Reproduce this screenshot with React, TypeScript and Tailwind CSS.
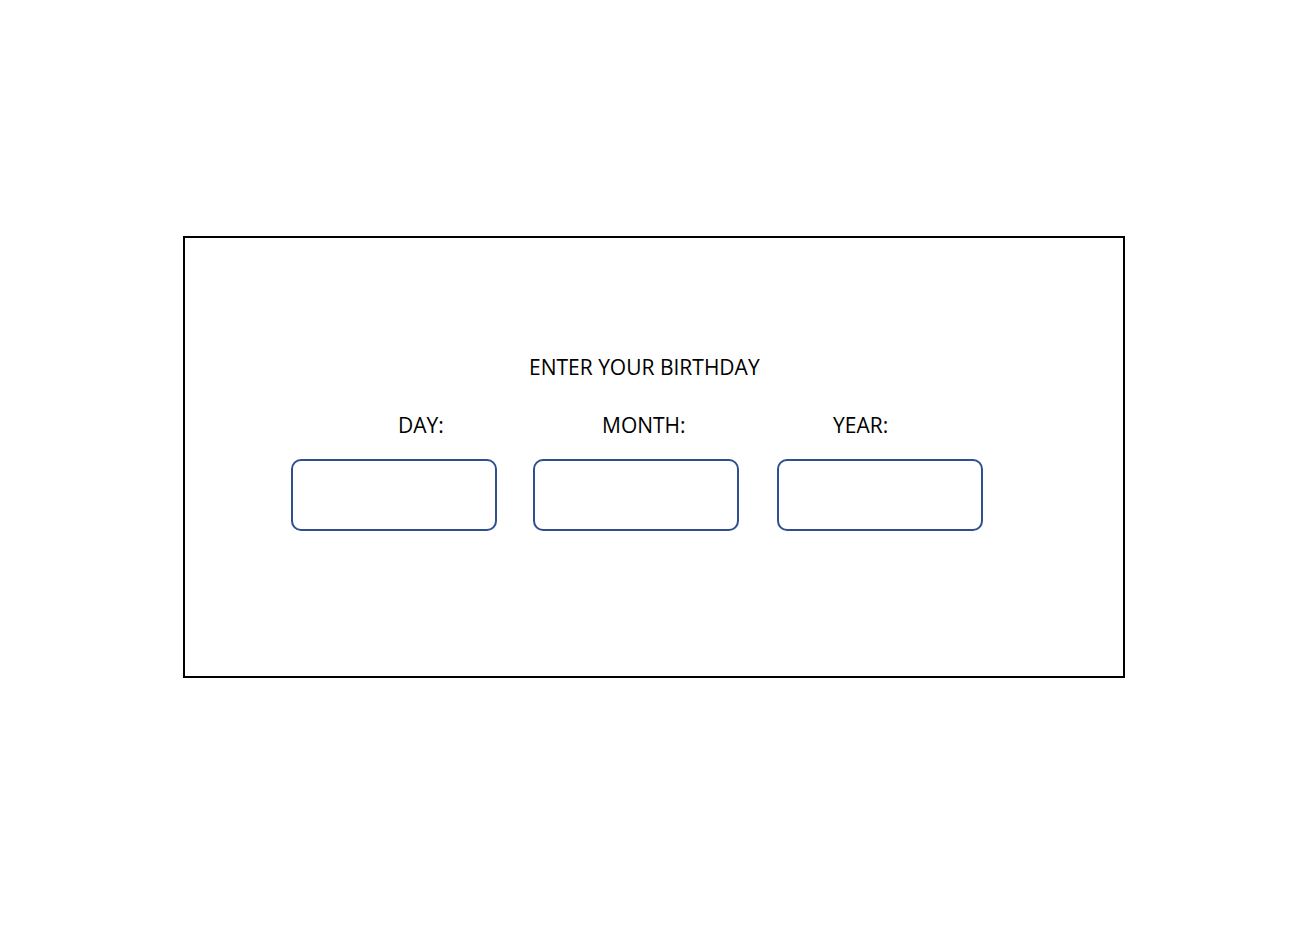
export default function App() {
  return (
    <div className="w-[1312px] h-[926px] bg-white pt-[236px] pl-[183px]" style={{ fontFamily: '"Open Sans", "Noto Sans", sans-serif' }}>
      <div className="w-[942px] h-[442px] border-2 border-black flex flex-col">
        <div className="mt-[115px] pl-[344px] text-[21px] leading-[28px] text-black">ENTER YOUR BIRTHDAY</div>
        <div className="mt-[30px] pl-[213px] flex text-[21px] leading-[28px] text-black">
          <span className="w-[204px]">DAY:</span>
          <span className="w-[231px]">MONTH:</span>
          <span>YEAR:</span>
        </div>
        <div className="mt-[20px] pl-[106px] flex">
          <div className="w-[206px] h-[72px] border-2 border-[#2f4f8f] rounded-[10px]" />
          <div className="ml-[36px] w-[206px] h-[72px] border-2 border-[#2f4f8f] rounded-[10px]" />
          <div className="ml-[38px] w-[206px] h-[72px] border-2 border-[#2f4f8f] rounded-[10px]" />
        </div>
      </div>
    </div>
  );
}
